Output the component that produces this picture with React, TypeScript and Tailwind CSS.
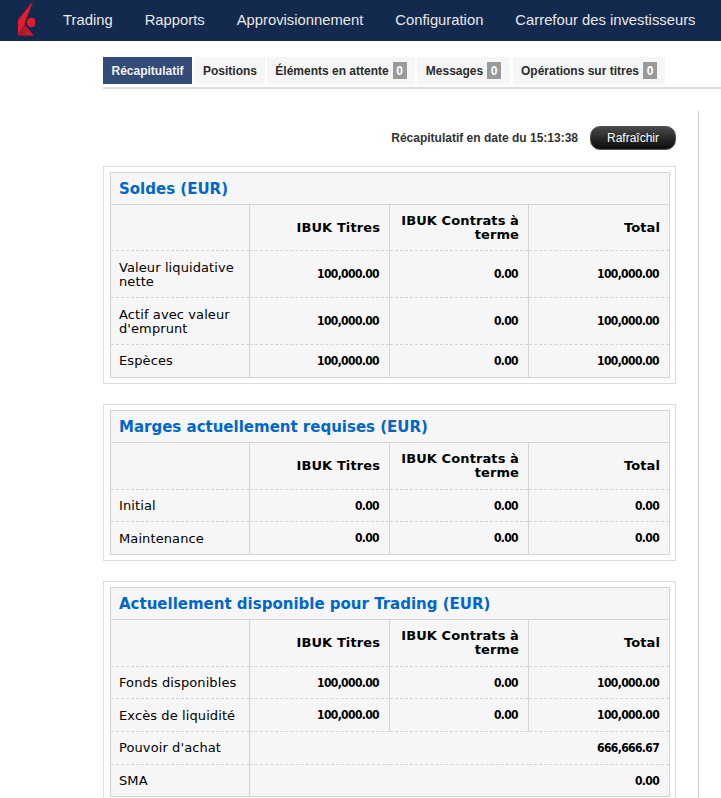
const sans = "font-['Liberation_Sans',Arial,sans-serif]";
const num = "pr-[10px] text-right align-middle font-['DejaVu_Sans_Condensed','DejaVu_Sans',sans-serif] text-[12px] font-bold tracking-[-0.63px] [font-stretch:condensed]";
const line = "border-r border-[#d4d4d4]";

function Logo() {
  return (
    <svg width="17" height="41" viewBox="18 0 17 41" className="block">
      <defs>
        <linearGradient id="logoLow" x1="0" y1="0" x2="1" y2="0.4">
          <stop offset="0" stopColor="#8f1528" />
          <stop offset="1" stopColor="#d81a2c" />
        </linearGradient>
      </defs>
      <path d="M33 1 L18 20 L18 35.5 L24.5 24 Z" fill="#e31b2d" />
      <path d="M18 35.5 L24.5 24 L33.5 35.5 Z" fill="url(#logoLow)" />
      <circle cx="31.5" cy="22.5" r="4.7" fill="#e31b2d" />
    </svg>
  );
}

function Tab({ label, count, active, w }: { label: string; count?: boolean; active?: boolean; w: string }) {
  return (
    <div
      className={`flex h-[27px] items-center justify-center gap-[4px] text-[12px] font-bold ${w} ${
        active ? "bg-[#334c77] text-[#f2f2f2]" : "bg-[#f6f6f6] text-[#2b2b2b]"
      }`}
    >
      <span>{label}</span>
      {count && (
        <span className="flex h-[17px] w-[14px] items-center justify-center bg-[#999999] text-[12px] text-white">0</span>
      )}
    </div>
  );
}

type Row = { label: string; h: string; vals: string[]; pad?: string };

const cell = "border-r border-[#d4d4d4] pr-[9px] text-right align-middle";

function Panel({ title, rows, outer, headH }: { title: string; rows: Row[]; outer: string; headH: string }) {
  return (
    <div className={`w-[573px] border border-[#dddddd] pb-[5px] pl-[6px] pr-[6px] pt-[5px] ${outer}`}>
      <table className="w-[559px] table-fixed border-collapse border border-[#d4d4d4] bg-[#f6f6f6] font-['DejaVu_Sans',sans-serif] text-black">
        <colgroup>
          <col className="w-[139px]" />
          <col className="w-[140px]" />
          <col className="w-[139px]" />
          <col className="w-[141px]" />
        </colgroup>
        <thead>
          <tr className="h-[32px] border-b border-[#d4d4d4]">
            <th colSpan={4} className="pl-[8px] pt-[1px] text-left text-[15px] font-bold text-[#0066cc]">
              {title}
            </th>
          </tr>
          <tr className={`${headH} border-b border-dashed border-[#d4d4d4] text-[13px] leading-[14px] tracking-[0.1px]`}>
            <th className={line} />
            <th className={`${cell} font-bold`}>IBUK Titres</th>
            <th className={`${cell} font-bold`}>IBUK Contrats à terme</th>
            <th className="pr-[9px] text-right font-bold">Total</th>
          </tr>
        </thead>
        <tbody>
          {rows.map((r) => (
            <tr key={r.label} className={`${r.h} border-b border-dashed border-[#d4d4d4] last:border-b-0`}>
              <td className={`${line} pl-[8px] pr-[6px] ${r.pad ?? "pt-[1px]"} text-[13px] leading-[14px] tracking-[0.1px]`}>{r.label}</td>
              {r.vals.length === 3 ? (
                <>
                  <td className={`${line} ${num}`}>{r.vals[0]}</td>
                  <td className={`${line} ${num}`}>{r.vals[1]}</td>
                  <td className={num}>{r.vals[2]}</td>
                </>
              ) : (
                <td colSpan={3} className={num}>
                  {r.vals[0]}
                </td>
              )}
            </tr>
          ))}
        </tbody>
      </table>
    </div>
  );
}

const m = "100,000.00";
const z = "0.00";

export default function App() {
  return (
    <div className={`h-[798px] w-[721px] overflow-hidden bg-white ${sans}`}>
      <header className="flex h-[41px] items-center bg-[#14294e] pl-[18px] text-[14.8px] text-[#e8e8e8]">
        <Logo />
        <nav className="ml-[28px] flex gap-[32px] whitespace-nowrap">
          <span>Trading</span>
          <span>Rapports</span>
          <span>Approvisionnement</span>
          <span>Configuration</span>
          <span>Carrefour des investisseurs</span>
        </nav>
      </header>

      <div className="ml-[103px] mt-[16px]">
        <div className="flex gap-[2px] border-b-2 border-[#dddddd] pb-[3px]">
          <Tab label="Récapitulatif" active w="mr-[1px] w-[89px]" />
          <Tab label="Positions" w="w-[70px]" />
          <Tab label="Éléments en attente" count w="w-[148px]" />
          <Tab label="Messages" count w="mr-[1px] w-[93px]" />
          <Tab label="Opérations sur titres" count w="w-[152px]" />
        </div>

        <div className="mt-[22px] w-[596px] border-r border-[#cccccc] pr-[22px] pt-[15px]">
          <div className="flex h-[24px] w-[573px] items-center justify-end">
            <span className="text-[12px] font-bold text-[#333333]">Récapitulatif en date du 15:13:38</span>
            <button className="ml-[12px] h-[24px] w-[86px] rounded-[10px] border border-[#555555] bg-gradient-to-b from-[#4a4a4a] to-[#0c0c0c] text-[12px] text-white">
              Rafraîchir
            </button>
          </div>

          <Panel
            outer="mt-[16px]"
            headH="h-[46px]"
            title="Soldes (EUR)"
            rows={[
              { label: "Valeur liquidative nette", h: "h-[47px]", vals: [m, z, m] },
              { label: "Actif avec valeur d'emprunt", h: "h-[47px]", vals: [m, z, m] },
              { label: "Espèces", h: "h-[33px]", vals: [m, z, m], pad: "pt-0" },
            ]}
          />
          <Panel
            outer="mt-[20px]"
            headH="h-[47px]"
            title="Marges actuellement requises (EUR)"
            rows={[
              { label: "Initial", h: "h-[32px]", vals: [z, z, z] },
              { label: "Maintenance", h: "h-[33px]", vals: [z, z, z] },
            ]}
          />
          <Panel
            outer="mt-[20px]"
            headH="h-[47px]"
            title="Actuellement disponible pour Trading (EUR)"
            rows={[
              { label: "Fonds disponibles", h: "h-[32px]", vals: [m, z, m] },
              { label: "Excès de liquidité", h: "h-[33px]", vals: [m, z, m] },
              { label: "Pouvoir d'achat", h: "h-[33px]", vals: ["666,666.67"], pad: "pt-0" },
              { label: "SMA", h: "h-[32px]", vals: [z] },
            ]}
          />
        </div>
      </div>
    </div>
  );
}
